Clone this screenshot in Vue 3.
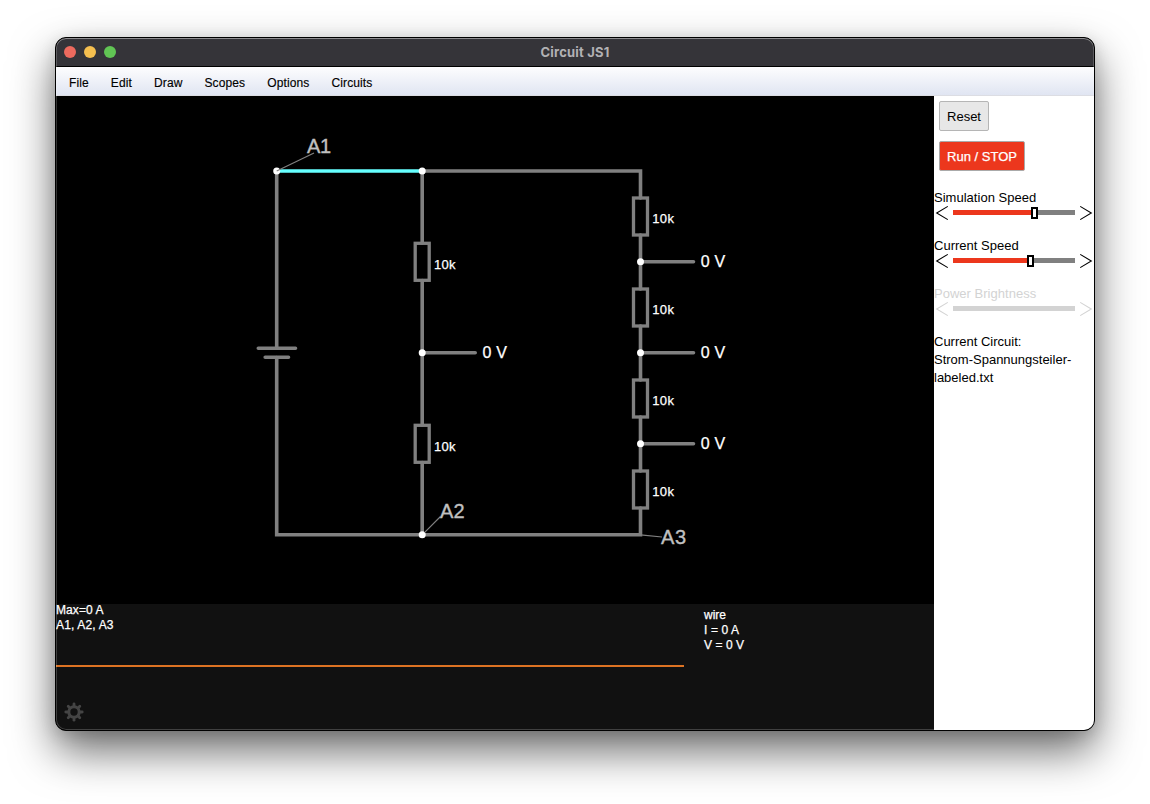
<script setup>
const menus = ['File', 'Edit', 'Draw', 'Scopes', 'Options', 'Circuits']
const sliders = [
  { label: 'Simulation Speed', fill: 78, thumb: true },
  { label: 'Current Speed', fill: 74, thumb: true },
  { label: 'Power Brightness', fill: 0, thumb: false, off: true }
]
const resistors = [
  { x: 422.2, y: 243.3 }, { x: 422.2, y: 425.3 },
  { x: 640.5, y: 198 }, { x: 640.5, y: 289 }, { x: 640.5, y: 380 }, { x: 640.5, y: 471 }
]
const probes = [
  { x: 422.2, y: 352.7 }, { x: 640.5, y: 261.8 }, { x: 640.5, y: 352.7 }, { x: 640.5, y: 443.8 }
]
const nodes = [[276.7, 171], [422.2, 171], [422.2, 534.8], ...probes.map(p => [p.x, p.y])]
const teeth = [0, 45, 90, 135, 180, 225, 270, 315]
</script>

<template>
  <div class="desktop">
    <div class="window">
      <header class="titlebar">
        <div class="lights"><i class="red"></i><i class="yellow"></i><i class="green"></i></div>
        <div class="title">Circuit JS1</div>
      </header>
      <nav class="menubar"><span v-for="m in menus" :key="m">{{ m }}</span></nav>
      <main class="body">
        <svg class="circuit" width="878" height="634" viewBox="56 96 878 634">
          <rect x="56" y="96" width="878" height="508" fill="#000" />
          <rect x="56" y="604" width="878" height="126" fill="#111" />
          <g class="wires">
            <path d="M422.2 171H640.5V198M640.5 235V289M640.5 326V380M640.5 417V471M640.5 508V534.8H276.7V357.5M276.7 171V348.3" />
            <path d="M422.2 171V243M422.2 280.5V425M422.2 462.5V534.8" />
            <path d="M258.3 348.3H295.5M265.2 357.3H288.5" />
            <path v-for="p in probes" :key="'p' + p.x + p.y" :d="`M${p.x} ${p.y}h53`" />
            <rect v-for="r in resistors" :key="'r' + r.x + r.y" :x="r.x - 7" :y="r.y" width="14" height="37" class="res" />
          </g>
          <path d="M276.7 171H422.2" class="selected" />
          <circle v-for="(n, i) in nodes" :key="i" :cx="n[0]" :cy="n[1]" r="3.5" fill="#fff" />
          <path class="leader" d="M276.7 171L314 153M424.7 532.3L440.5 516.5M640.5 534.8L662 537" />
          <g class="tag">
            <text x="307" y="153" textLength="24">A1</text>
            <text x="440" y="518" textLength="24.5">A2</text>
            <text x="661" y="544" textLength="25">A3</text>
          </g>
          <g class="value">
            <text v-for="r in resistors" :key="'v' + r.x + r.y" :x="r.x + 11.7" :y="r.y + 25.3" textLength="21.7">10k</text>
          </g>
          <g class="volt">
            <text v-for="p in probes" :key="'t' + p.x + p.y" :x="p.x + 60.3" :y="p.y + 5.5" textLength="24.3">0 V</text>
          </g>
          <path d="M56 666H684" stroke="#dd7323" stroke-width="2" />
          <g class="info">
            <text x="56" y="614" textLength="47.5">Max=0 A</text>
            <text x="56" y="629" textLength="57.5">A1, A2, A3</text>
            <text x="704" y="619" textLength="22">wire</text>
            <text x="704" y="634" textLength="35">I = 0 A</text>
            <text x="704" y="649" textLength="40">V = 0 V</text>
          </g>
          <g transform="translate(74 712)" fill="none" stroke="#444">
            <circle r="5.2" stroke-width="3" />
            <path v-for="a in teeth" :key="a" d="M0 -6V-8.2" stroke-width="2.8" stroke-linecap="round" :transform="`rotate(${a})`" />
          </g>
        </svg>
        <aside class="side">
          <button class="btn">Reset</button>
          <button class="btn run">Run / STOP</button>
          <section class="controls">
            <div v-for="s in sliders" :key="s.label" class="control" :class="{ off: s.off }">
              <div class="label">{{ s.label }}</div>
              <div class="slider">
                <svg width="14" height="16" viewBox="0 0 14 16"><path d="M12.8 1.4L1.7 8L12.8 14.6" /></svg>
                <div class="track">
                  <div class="fill" :style="{ width: s.fill + 'px' }"></div>
                  <div v-if="s.thumb" class="thumb" :style="{ left: s.fill + 'px' }"></div>
                </div>
                <svg width="14" height="16" viewBox="0 0 14 16"><path d="M1.2 1.4L12.3 8L1.2 14.6" /></svg>
              </div>
            </div>
          </section>
          <div class="current">Current Circuit:<br>Strom-Spannungsteiler-<br>labeled.txt</div>
        </aside>
      </main>
    </div>
  </div>
</template>

<style>
html, body { background: #fff; overflow: hidden; }
</style>

<style scoped>
.desktop { width: 1150px; height: 804px; box-sizing: border-box; padding: 37px 55px 73px; font-family: "Liberation Sans", Arial, sans-serif; overflow: hidden; background: #fff; }
.window { position: relative; width: 1040px; height: 694px; box-sizing: border-box; border: 1px solid #000; border-radius: 11px; overflow: hidden; background: #000; box-shadow: 0 20px 44px rgba(0, 0, 0, .58), 0 4px 16px rgba(0, 0, 0, .12); }
.window::after { content: ""; position: absolute; inset: 0; border-radius: 10px; box-shadow: inset 0 1px 0 rgba(255, 255, 255, .3), inset 0 0 0 1px rgba(255, 255, 255, .2); pointer-events: none; }
.titlebar { position: relative; height: 29px; box-sizing: border-box; border-bottom: 1px solid #000; background: #353439; display: flex; align-items: center; justify-content: center; }
.lights { position: absolute; left: 8px; top: 8px; display: flex; gap: 8px; }
.lights i { width: 12px; height: 12px; border-radius: 50%; }
.red { background: #ed6a5e; }
.yellow { background: #f5bf4f; }
.green { background: #61c554; }
.title { font: bold 13px Inter, sans-serif; letter-spacing: .2px; color: #b2b1b4; }
.menubar { height: 29px; box-sizing: border-box; border-bottom: 1px solid #dcdde3; background: linear-gradient(#fdfdfe, #e0e5f2); display: flex; gap: 22px; padding-left: 13px; font-size: 12px; line-height: 32px; letter-spacing: .12px; color: #000; -webkit-text-stroke: .15px #000; }
.body { display: flex; height: 634px; }
.circuit { display: block; flex: none; }
.wires { fill: none; stroke: #808080; stroke-width: 3.6; stroke-linecap: round; }
.wires .res { stroke-width: 3.3; }
.selected { stroke: #6ff; stroke-width: 3.6; }
.leader { fill: none; stroke: #808080; stroke-width: 1.2; }
.tag { fill: #c0c0c0; font-size: 20px; stroke: #c0c0c0; stroke-width: .35px; }
.value { fill: #fff; font-size: 13px; stroke: #fff; stroke-width: .25px; }
.volt { fill: #fff; font-size: 16px; stroke: #fff; stroke-width: .25px; }
.info { fill: #fff; font-size: 12px; stroke: #fff; stroke-width: .25px; }
.side { width: 160px; background: #fff; display: flex; flex-direction: column; align-items: flex-start; }
.btn { margin: 5px 0 0 5px; width: 50px; height: 30px; box-sizing: border-box; padding: 0; border: 1px solid #b5b5b5; border-radius: 2px; background: #e7e7e7; font: 13px "Liberation Sans", sans-serif; color: #000; white-space: nowrap; }
.run { width: 86px; margin-top: 10px; background: #ec371d; color: #fff; border-color: #aaa; -webkit-text-stroke: .25px #fff; }
.controls { margin-top: 17px; width: 160px; }
.control { height: 48px; color: #000; }
.label { font-size: 13px; line-height: 20px; height: 17px; letter-spacing: .02px; }
.slider { display: flex; align-items: center; height: 16px; padding: 0 1px; justify-content: space-between; }
.slider svg { fill: none; stroke: currentColor; stroke-width: 1.1; display: block; }
.track { position: relative; width: 122px; height: 5px; background: #808080; margin-right: 1px; top: -.5px; }
.fill { height: 5px; background: #ec371d; }
.thumb { position: absolute; top: -3.5px; width: 7px; height: 12px; box-sizing: border-box; border: 2px solid #000; background: #fff; }
.off { color: #d3d3d3; }
.off .track { background: #d3d3d3; }
.current { margin-top: 1px; font-size: 13px; line-height: 18px; color: #000; letter-spacing: 0; }
</style>
